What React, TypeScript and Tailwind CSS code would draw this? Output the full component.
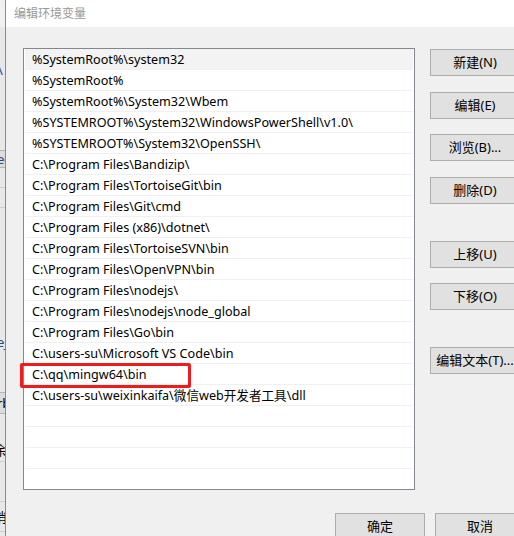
import React from 'react';

const paths: string[] = [
    "%SystemRoot%\\system32",
    "%SystemRoot%",
    "%SystemRoot%\\System32\\Wbem",
    "%SYSTEMROOT%\\System32\\WindowsPowerShell\\v1.0\\",
    "%SYSTEMROOT%\\System32\\OpenSSH\\",
    "C:\\Program Files\\Bandizip\\",
    "C:\\Program Files\\TortoiseGit\\bin",
    "C:\\Program Files\\Git\\cmd",
    "C:\\Program Files (x86)\\dotnet\\",
    "C:\\Program Files\\TortoiseSVN\\bin",
    "C:\\Program Files\\OpenVPN\\bin",
    "C:\\Program Files\\nodejs\\",
    "C:\\Program Files\\nodejs\\node_global",
    "C:\\Program Files\\Go\\bin",
    "C:\\users-su\\Microsoft VS Code\\bin",
    "C:\\qq\\mingw64\\bin",
    "C:\\users-su\\weixinkaifa\\微信web开发者工具\\dll",
];

const font = "font-['Segoe_UI','Noto_Sans','Noto_Sans_CJK_SC',sans-serif]";

const WinButton: React.FC<{ label: string; className?: string }> = ({ label, className = '' }) => (
    <button
        className={`h-[27px] w-[90px] shrink-0 bg-[#e1e1e1] border border-[#adadad] text-[13px] text-black leading-none ${className}`}
    >
        {label}
    </button>
);

export default function App() {
    const rows = [...paths, '', '', '', ''];

    return (
        <div className={`flex w-[514px] h-[536px] overflow-hidden bg-[#f0f0f0] ${font}`}>
            {/* window behind the dialog */}
            <div className="w-[6px] shrink-0 flex flex-col overflow-hidden bg-[#e8e8e8] border-r border-[#8a8a8a] text-[13px] text-[#1a4a8a]">
                <div className="h-[27px] bg-[#f0f0f0]" />
                <div className="h-[33px]" />
                <div className="h-[20px] leading-[20px] -ml-[2px] whitespace-nowrap">\</div>
                <div className="h-[70px]" />
                <div className="h-[18px] border-t border-b border-[#b5b5b5] bg-[#dcdcdc] leading-[16px] -ml-[3px] whitespace-nowrap">e(</div>
                <div className="h-[20px] border-b border-[#cfcfcf]" />
                <div className="h-[20px] border-b border-[#cfcfcf]" />
                <div className="h-[124px]" />
                <div className="h-[20px] leading-[20px] -ml-[3px] whitespace-nowrap">ej</div>
                <div className="h-[40px]" />
                <div className="h-[22px] border-t border-b border-[#b5b5b5] bg-[#dcdcdc] leading-[20px] -ml-[3px] whitespace-nowrap text-black">rb</div>
                <div className="h-[26px]" />
                <div className="h-[22px] border-b border-[#cfcfcf] leading-[20px] -ml-[6px] whitespace-nowrap text-black">余</div>
                <div className="h-[40px] border-b border-[#cfcfcf]" />
                <div className="h-[30px] border-b border-[#cfcfcf] leading-[30px] -ml-[6px] whitespace-nowrap text-black">消</div>
            </div>

            {/* dialog */}
            <div className="flex-1 flex flex-col">
                <div className="h-[27px] shrink-0 bg-white flex items-center justify-between pl-[8px] pr-0">
                    <span className="text-[12px] text-[#999999]">编辑环境变量</span>
                    <span className="text-[12px] text-[#888] leading-none translate-x-[4px] -translate-y-[2px]">✕</span>
                </div>

                <div className="flex-1 flex flex-col">
                    <div className="flex pl-[17px] pt-[21px]">
                        <div className="relative w-[392px] h-[442px] shrink-0 border border-[#828790] bg-white">
                            <div className="h-full overflow-hidden">
                                {rows.map((p, i) => (
                                    <div
                                        key={i}
                                        className={`h-[21px] border-b border-[#f0f0f0] mx-[1px] pl-[7px] text-[12.6px] leading-[21px] text-black whitespace-nowrap ${i === 0 ? 'bg-[#f3f3f3]' : ''}`}
                                    >
                                        {p}
                                    </div>
                                ))}
                            </div>
                            {/* highlight annotation */}
                            <div className="absolute left-[-4px] top-[314px] w-[171px] h-[25px] border-[3px] border-[#ee1c1c] rounded-[2px]" />
                        </div>

                        <div className="flex flex-col ml-[15px] pt-[1px]">
                            <WinButton label="新建(N)" />
                            <WinButton label="编辑(E)" className="mt-[16px]" />
                            <WinButton label="浏览(B)..." className="mt-[15px]" />
                            <WinButton label="删除(D)" className="mt-[16px]" />
                            <WinButton label="上移(U)" className="mt-[37px]" />
                            <WinButton label="下移(O)" className="mt-[15px]" />
                            <WinButton label="编辑文本(T)..." className="mt-[37px]" />
                        </div>
                    </div>

                    <div className="flex gap-[10px] pl-[329px] mt-[23px]">
                        <WinButton label="确定" className="w-[86px]" />
                        <WinButton label="取消" className="w-[86px]" />
                    </div>
                </div>
            </div>
        </div>
    );
}
